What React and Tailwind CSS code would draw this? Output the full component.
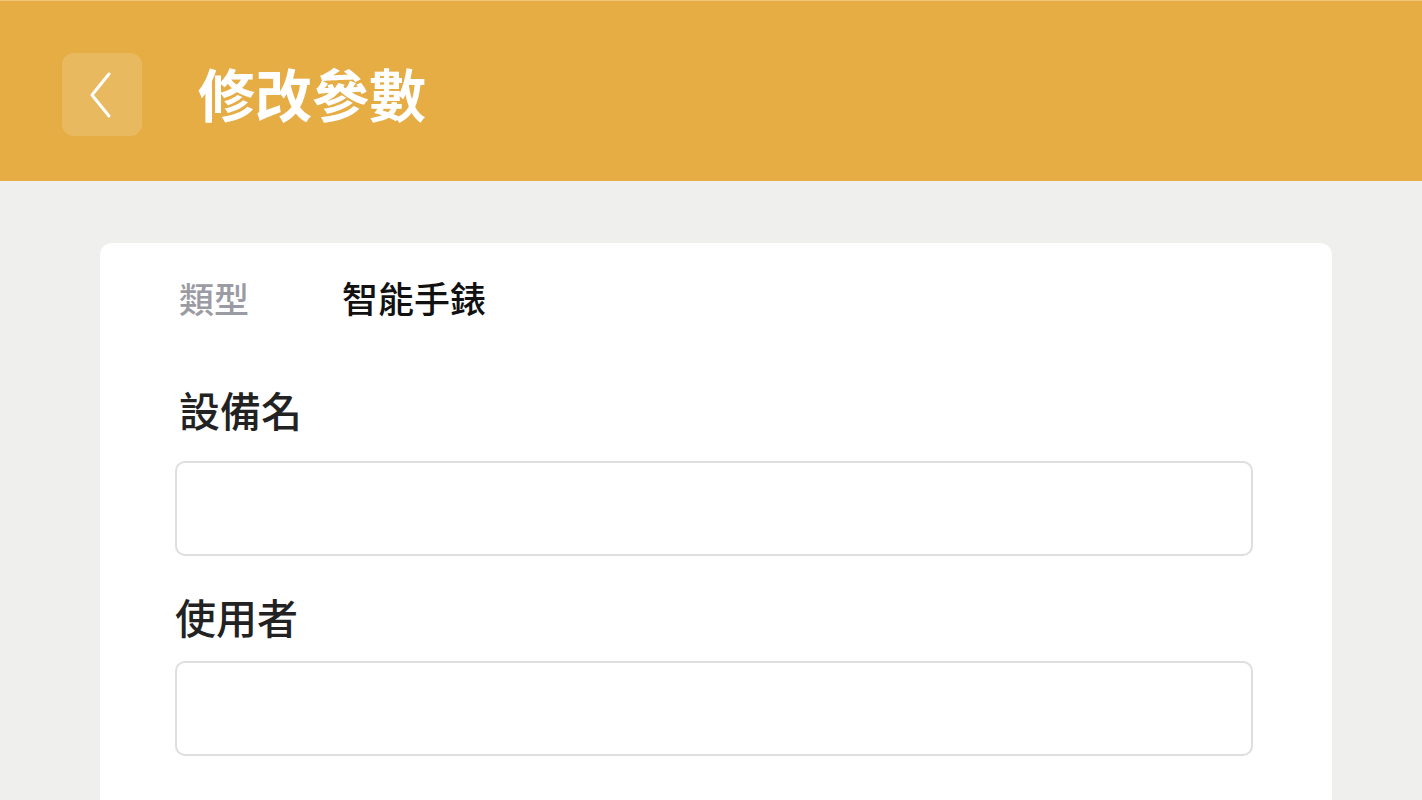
const cjk = { fontFamily: '"Noto Sans CJK TC", "Noto Sans CJK SC", sans-serif' }

function BackButton() {
    return (
        <button className="flex h-[83px] w-[80px] items-center justify-center rounded-[12px] bg-white/15">
            <svg width="30" height="48" viewBox="0 0 30 48" fill="none">
                <path d="M22 3 L5 24 L22 45" stroke="white" strokeWidth="3" strokeLinecap="round" strokeLinejoin="round" />
            </svg>
        </button>
    )
}

function Field({ label, labelClass, inputClass }) {
    return (
        <div>
            <div className={"text-[41px] font-medium leading-none text-[#222222] " + labelClass}>{label}</div>
            <div className={"h-[95px] w-full rounded-[10px] border-2 border-[#dedede] bg-white " + inputClass} />
        </div>
    )
}

export default function App() {
    return (
        <div className="min-h-[800px] w-full bg-[#efefed]" style={cjk}>
            <header className="flex h-[181px] items-center border-t border-[#f0c77a] bg-[#e6ad45] pl-[62px] pt-[7px]">
                <BackButton />
                <h1 className="mb-[4px] ml-[56px] text-[57px] font-bold leading-none text-white">修改參數</h1>
            </header>

            <div className="pl-[100px] pr-[90px] pt-[62px]">
                <div className="h-[557px] rounded-t-[12px] bg-white pl-[75px] pr-[79px] pt-[36px]">
                    <div className="flex items-center pl-[4px] font-medium leading-none">
                        <span className="w-[163px] text-[35px] text-[#9b9ba3]">類型</span>
                        <span className="text-[36px] text-[#111111]">智能手錶</span>
                    </div>

                    <Field label="設備名" labelClass="mt-[74px] pl-[4px]" inputClass="mt-[31px]" />
                    <Field label="使用者" labelClass="mt-[40px]" inputClass="mt-[24px]" />
                </div>
            </div>
        </div>
    )
}
